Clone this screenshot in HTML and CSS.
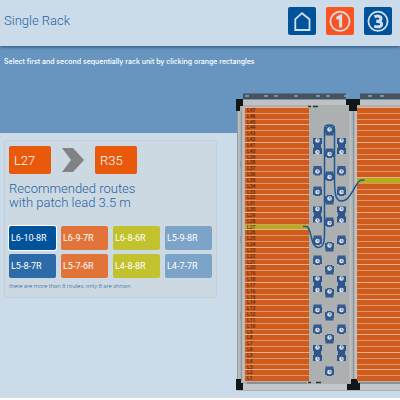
FILE: index.html
```html
<!DOCTYPE html>
<html lang="en">
<head>
<meta charset="utf-8">
<title>Single Rack</title>
<link rel="stylesheet" href="styles.css">
</head>
<body>
<header class="topbar">
  <h1 class="title">Single Rack</h1>
  <nav class="nav">
    <button class="nav-button" type="button" aria-label="Home">
      <svg viewBox="0 0 28 28"><path d="M7.300 23V12.200L14 6.200l7.500 6v10.800z"/></svg>
    </button>
    <button class="nav-button nav-active" type="button" aria-label="Step 1">
      <svg viewBox="0 0 28 28"><circle cx="14" cy="14.300" r="9.600"/><path class="digit" d="M10.600 11.600L14.600 9.200V20.600"/></svg>
    </button>
    <button class="nav-button" type="button" aria-label="Step 3">
      <svg viewBox="0 0 28 28"><circle cx="14" cy="14.300" r="9.600"/><path class="digit" d="M10.500 9.800C13 8.700 17 8.800 17 11.400C17 13.400 15 14.200 12.200 14.200C15.500 14.200 17.600 15 17.600 17.200C17.600 20 13 20.400 10.200 19.200"/></svg>
    </button>
  </nav>
</header>
<main class="stage">
  <p class="hint">Select first and second sequentially rack unit by clicking orange rectangles</p>
  <div class="workspace">
    <section class="panel">
      <div class="pair">
        <span class="unit">L27</span>
        <svg class="arrow" viewBox="0 0 22 24"><path d="M0 0h11l11 12-11 12H0l9-12z"/></svg>
        <span class="unit">R35</span>
      </div>
      <h2 class="subtitle">Recommended routes<br>with patch lead 3.5 m</h2>
      <div class="routes">
        <button class="route navy selected" type="button">L6-10-8R</button>
        <button class="route orange" type="button">L6-9-7R</button>
        <button class="route lime" type="button">L6-8-6R</button>
        <button class="route sky" type="button">L5-9-8R</button>
        <button class="route blue" type="button">L5-8-7R</button>
        <button class="route orange" type="button">L5-7-6R</button>
        <button class="route lime" type="button">L4-8-8R</button>
        <button class="route sky" type="button">L4-7-7R</button>
      </div>
      <p class="note">there are more than 8 routes, only 8 are shown</p>
    </section>
    <div class="rack">
      <svg class="frame" width="300" height="300" viewBox="236 93 300 300">
        <defs>
          <g id="port"><path d="M-4-4.500h8v2.500h.5v6h-2v1h-5v-1h-2v-6h.5z" fill="#345a8d"/><circle r="2.300" cy="1" fill="#dce3ec"/><path d="M-.5 0h1v2" fill="none" stroke="#566f93" stroke-width=".8"/></g>
          <g id="portUp"><path d="M-4 4.500h8V2h.5v-6h-2v-1h-5v1h-2v6h.5z" fill="#345a8d"/><circle r="2.300" cy="-1.500" fill="#dce3ec"/><path d="M-.5-2.500h1v2" fill="none" stroke="#566f93" stroke-width=".8"/></g>
          <g id="double"><path d="M-4.500-8h9v6h-1v4h1v6h-9V2h1v-4h-1z" fill="#2f548a"/><circle r="2.300" cy="-5.500" fill="#dce3ec"/><circle r="2.300" cy="6" fill="#dce3ec"/><path d="M-.5-6.500h1v2M-.5 5h1v2" fill="none" stroke="#566f93" stroke-width=".8"/></g>
          <g id="side">
            <use href="#double" y="146"/><use href="#port" y="170.500"/><use href="#port" y="191"/>
            <use href="#double" y="214.500"/><use href="#port" y="240"/><use href="#port" y="260"/>
            <use href="#double" y="284"/><use href="#port" y="309"/><use href="#port" y="329"/>
            <use href="#double" y="353"/>
          </g>
        </defs>
        <path d="M243 93.500h103v6H243zM360 93.500h120v6H360z" fill="#45535f"/>
        <path d="M245 96h4m15 0h4m6 0h4m16 0h4m18 0h4m6 0h4m14 0h4m20 0h4m8 0h4m17 0h4" stroke="#7fa8c8" stroke-width="1.500"/>
        <path d="M237 99.500h300V391H237z" fill="#adb0b0"/>
        <path d="M243 100h106v5H243zM357 100h120v5H357z" fill="#bfc2c5"/>
        <path d="M243 384h106v6H243zM359 384h120v6H359z" fill="#c3c6c8"/>
        <path d="M247 383h60M359 383h120" stroke="#8d9091" stroke-width="2"/>
        <path d="M238.500 111v269M243.500 106v276M350.500 105v276M356 111v270" stroke="#bec0c1" stroke-width="2"/>
        <path d="M237.500 111v269M241.500 111v269M353.500 111v269" stroke="#929799"/>
        <path d="M240 161h2v6h-2zM240 236h2v7h-2zM240 312h2v7h-2z" fill="#969a9c"/>
        <path d="M353.500 111v23" stroke="#7b96ad"/>
        <path d="M236 99h7v7h-3v5h-4zM346 99h14v6h-3v6h-8v-6h-3zM236 379h5v4h2v7h-7zM351 379h7v4h2v7h-13v-6h4z" fill="#111719"/>
        <path d="M308 106.500h3m2 0h5M308 382.500h3m5 0h5" stroke="#303234" stroke-width="1.500"/>
        <use href="#side" x="317.500"/><use href="#side" x="341.500"/>
        <g>
          <use href="#portUp" x="329.500" y="131"/><use href="#port" x="329.500" y="153"/>
          <use href="#port" x="329.500" y="176"/><use href="#portUp" x="329.500" y="200"/>
          <use href="#port" x="329.500" y="222"/><use href="#portUp" x="329.500" y="247"/>
          <use href="#portUp" x="329.500" y="270"/><use href="#portUp" x="329.500" y="293"/>
          <use href="#portUp" x="329.500" y="316"/><use href="#portUp" x="329.500" y="339"/>
          <use href="#port" x="329.500" y="371"/>
        </g>
      </svg>
      <div class="units" id="left"></div>
      <div class="units" id="right"></div>
      <svg class="cable" width="300" height="300" viewBox="236 93 300 300">
        <path d="M303 226.500h3c6 0 4 21 12 21c7 0 6.500-8 6.500-20V130c0-5 2-5 5-5s5 0 5 5v48c0 16 1 23 7 23c10 0 14-21 20-21h3"/>
      </svg>
    </div>
  </div>
</main>
<script src="rack.js"></script>
</body>
</html>
```
FILE: styles.css
```css
* { box-sizing: border-box; }
body {
  margin: 0;
  font-family: Roboto, "Liberation Sans", sans-serif;
  background: #fff;
  color: #1f64a4;
  overflow: hidden;
}
button { font-family: inherit; border: 0; padding: 0; cursor: pointer; }
h1, h2, p { margin: 0; font-weight: 300; }
.topbar {
  position: relative;
  display: flex;
  align-items: center;
  justify-content: space-between;
  height: 46px;
  padding: 0 8px 4px 4px;
  background: #ccdbea;
  box-shadow: 0 1px 3px #2f5478;
}
.title { font-size: 13px; line-height: 16px; }
.nav { display: flex; gap: 10px; }
.nav-button {
  width: 28px;
  height: 28px;
  border-radius: 2px;
  background: #00529b;
}
.nav-active { background: #fb5421; }
.nav-button svg { display: block; fill: none; stroke: #d3dfec; stroke-width: 1.800; }
.nav-button .digit { stroke-width: 3; }
.stage {
  padding-bottom: 5px;
  background: linear-gradient(#6795c0 87px, #ccdbea 87px);
}
.hint {
  height: 47px;
  padding: 11px 4px 0;
  font-family: Inter, "Liberation Sans", sans-serif;
  font-size: 7px;
  line-height: 10px;
  font-weight: 500;
  color: #fff;
  white-space: nowrap;
}
.workspace { display: flex; align-items: flex-start; gap: 19px; }
.panel {
  flex: none;
  width: 213px;
  height: 158px;
  margin: 47px 0 0 4px;
  padding: 5px 4px;
  border: 1px solid #c2d0da;
  border-radius: 2px;
  background: #cdd9e2;
}
.pair { display: flex; align-items: center; justify-content: flex-start; gap: 11px; }
.unit {
  width: 42px;
  height: 28px;
  padding-left: 5px;
  border-radius: 2px;
  background: #e8590c;
  color: #fff;
  font-size: 13px;
  line-height: 30px;
  font-weight: 300;
}
.arrow { width: 22px; height: 24px; fill: #808285; }
.subtitle { margin-top: 8px; font-size: 13px; line-height: 14px; }
.routes {
  display: grid;
  grid-template-columns: repeat(4, 1fr);
  gap: 4px 5px;
  margin-top: 16px;
}
.route {
  height: 24px;
  padding-left: 2px;
  border-radius: 2px;
  color: #fff;
  font-size: 9px;
  text-align: left;
  white-space: nowrap;
}
.navy { background: #00529b; }
.selected { box-shadow: 0 0 0 1px #fff; }
.orange { background: #e2743a; }
.lime { background: #c2c22e; }
.sky { background: #7ca4c9; }
.blue { background: #2b6ca8; }
.note { margin-top: 3px; font-size: 6px; line-height: 10px; }
.rack {
  position: relative;
  flex: 1;
  min-width: 0;
  display: grid;
  grid-template-columns: 64px 1fr;
  column-gap: 48px;
  height: 300px;
  padding: 14px 0 18px 9px;
  overflow: hidden;
}
.frame, .cable { position: absolute; top: 0; left: 0; }
.cable { pointer-events: none; fill: none; stroke: #195996; stroke-width: 1.500; }
.units {
  position: relative;
  display: grid;
  grid-template-rows: repeat(47, 1fr);
  height: 274px;
  margin-bottom: -6px;
}
.rack-unit {
  min-height: 0;
  padding-left: 2px;
  border-top: 1px solid #dc966e;
  background: #cf5c1d;
  color: #57290f;
  font-size: 5px;
  line-height: 5px;
  font-weight: 500;
  text-align: left;
  overflow: hidden;
}
.rack-unit:nth-child(3n + 1) { border-top-color: #e6b192; }
.rack-unit.picked { background: #b5ae18; }
```
FILE: rack.js
```js
// Fill both sides with units numbered from 47 at the top to 1 at the bottom.
function fillRack(id, prefix, picked) {
  const column = document.getElementById(id);
  for (let n = 47; n >= 1; n--) {
    const unit = document.createElement("button");
    unit.type = "button";
    unit.className = n === picked ? "rack-unit picked" : "rack-unit";
    unit.setAttribute("aria-label", prefix + n);
    if (prefix === "L") unit.textContent = prefix + n;
    column.append(unit);
  }
}
fillRack("left", "L", 27);
fillRack("right", "R", 35);
```
